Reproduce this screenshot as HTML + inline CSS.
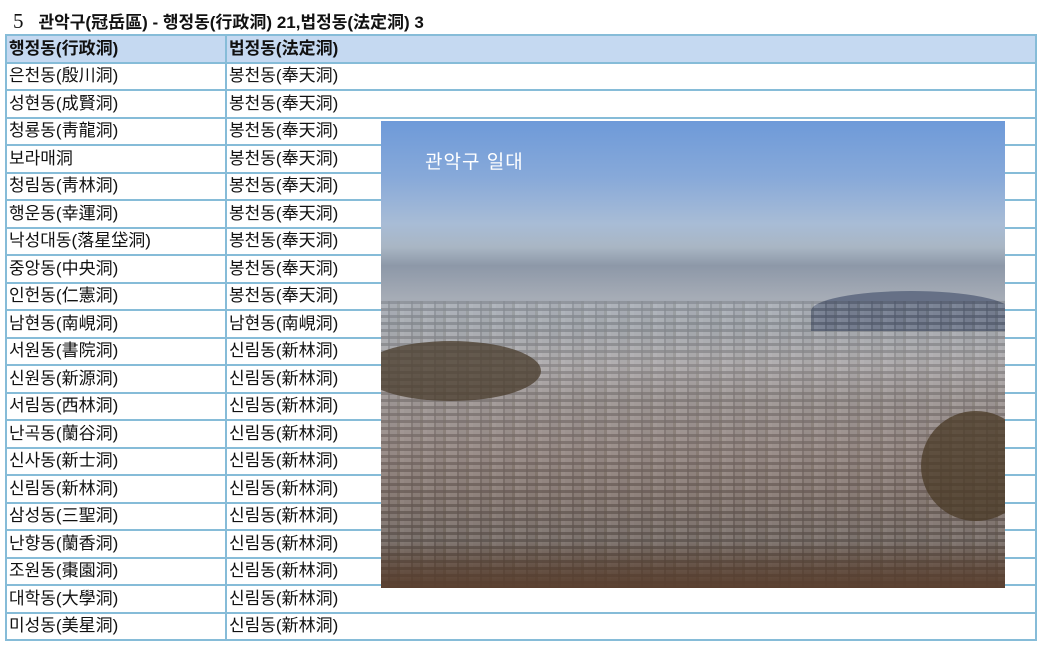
<!DOCTYPE html>
<html><head><meta charset="utf-8"><style>
body{margin:0;width:1040px;height:646px;background:#fff;position:relative;overflow:hidden;font-family:"Liberation Sans","Noto Sans CJK KR",sans-serif;}
.title{position:absolute;left:13px;top:8px;font-size:17px;font-weight:bold;color:#111;white-space:nowrap}
.title span{font-weight:normal;font-family:"Liberation Serif",serif;font-size:21px;margin-right:15px}
table{position:absolute;left:5px;top:34px;border-collapse:collapse;width:1032px;table-layout:fixed}
tr{height:27.5px}
td{border:2px solid #86bcd8;padding:0 0 0 2px;font-size:17px;color:#111;white-space:nowrap;line-height:22px;overflow:hidden}
td.a{width:216px}
tr.h td{background:#c5d9f1;font-weight:bold}
.img{position:absolute;left:381px;top:121px;width:624px;height:467px;overflow:hidden;
background:linear-gradient(180deg,#6e9ad9 0%,#87a9d9 12%,#a8bcd6 22%,#a9b6c4 27%,#8d98a8 31%,#a6acb6 38%,#9ea3aa 44%,#a8a4a6 52%,#958c8a 60%,#8e7f7a 70%,#7d6d66 80%,#6e625c 90%,#5a4a3e 100%)}
.img .t{position:absolute;left:44px;top:26px;color:#fff;font-size:19px;letter-spacing:1px}
.tex{position:absolute;left:0;top:180px;width:624px;height:287px;opacity:.18;
background:repeating-linear-gradient(90deg,#ddd 0 7px,#555 7px 9px,#bbb 9px 16px,#776 16px 19px,#eee 19px 23px),repeating-linear-gradient(0deg,#fff 0 4px,#444 4px 7px);background-blend-mode:multiply}
.m1{position:absolute;left:-20px;top:220px;width:180px;height:60px;border-radius:50%;background:#4a3c2c;opacity:.75}
.m3{position:absolute;left:540px;top:290px;width:110px;height:110px;border-radius:50%;background:#4a3a25;opacity:.75}
.m4{position:absolute;left:0;top:420px;width:624px;height:47px;background:linear-gradient(180deg,transparent,#5a4030)}
.m5{position:absolute;left:430px;top:170px;width:200px;height:40px;border-radius:50% 50% 0 0;background:#56627a;opacity:.8}
</style></head><body>
<div class="title"><span>5</span>관악구(冠岳區) - 행정동(行政洞) 21,법정동(法定洞) 3</div>
<table>
<tr class="h"><td class="a">행정동(行政洞)</td><td>법정동(法定洞)</td></tr>
<tr><td class="a">은천동(殷川洞)</td><td>봉천동(奉天洞)</td></tr>
<tr><td class="a">성현동(成賢洞)</td><td>봉천동(奉天洞)</td></tr>
<tr><td class="a">청룡동(靑龍洞)</td><td>봉천동(奉天洞)</td></tr>
<tr><td class="a">보라매洞</td><td>봉천동(奉天洞)</td></tr>
<tr><td class="a">청림동(靑林洞)</td><td>봉천동(奉天洞)</td></tr>
<tr><td class="a">행운동(幸運洞)</td><td>봉천동(奉天洞)</td></tr>
<tr><td class="a">낙성대동(落星垈洞)</td><td>봉천동(奉天洞)</td></tr>
<tr><td class="a">중앙동(中央洞)</td><td>봉천동(奉天洞)</td></tr>
<tr><td class="a">인헌동(仁憲洞)</td><td>봉천동(奉天洞)</td></tr>
<tr><td class="a">남현동(南峴洞)</td><td>남현동(南峴洞)</td></tr>
<tr><td class="a">서원동(書院洞)</td><td>신림동(新林洞)</td></tr>
<tr><td class="a">신원동(新源洞)</td><td>신림동(新林洞)</td></tr>
<tr><td class="a">서림동(西林洞)</td><td>신림동(新林洞)</td></tr>
<tr><td class="a">난곡동(蘭谷洞)</td><td>신림동(新林洞)</td></tr>
<tr><td class="a">신사동(新士洞)</td><td>신림동(新林洞)</td></tr>
<tr><td class="a">신림동(新林洞)</td><td>신림동(新林洞)</td></tr>
<tr><td class="a">삼성동(三聖洞)</td><td>신림동(新林洞)</td></tr>
<tr><td class="a">난향동(蘭香洞)</td><td>신림동(新林洞)</td></tr>
<tr><td class="a">조원동(棗園洞)</td><td>신림동(新林洞)</td></tr>
<tr><td class="a">대학동(大學洞)</td><td>신림동(新林洞)</td></tr>
<tr><td class="a">미성동(美星洞)</td><td>신림동(新林洞)</td></tr>
</table>
<div class="img"><div class="m5"></div><div class="tex"></div><div class="m1"></div><div class="m3"></div><div class="m4"></div><div class="t">관악구 일대</div></div>
</body></html>
